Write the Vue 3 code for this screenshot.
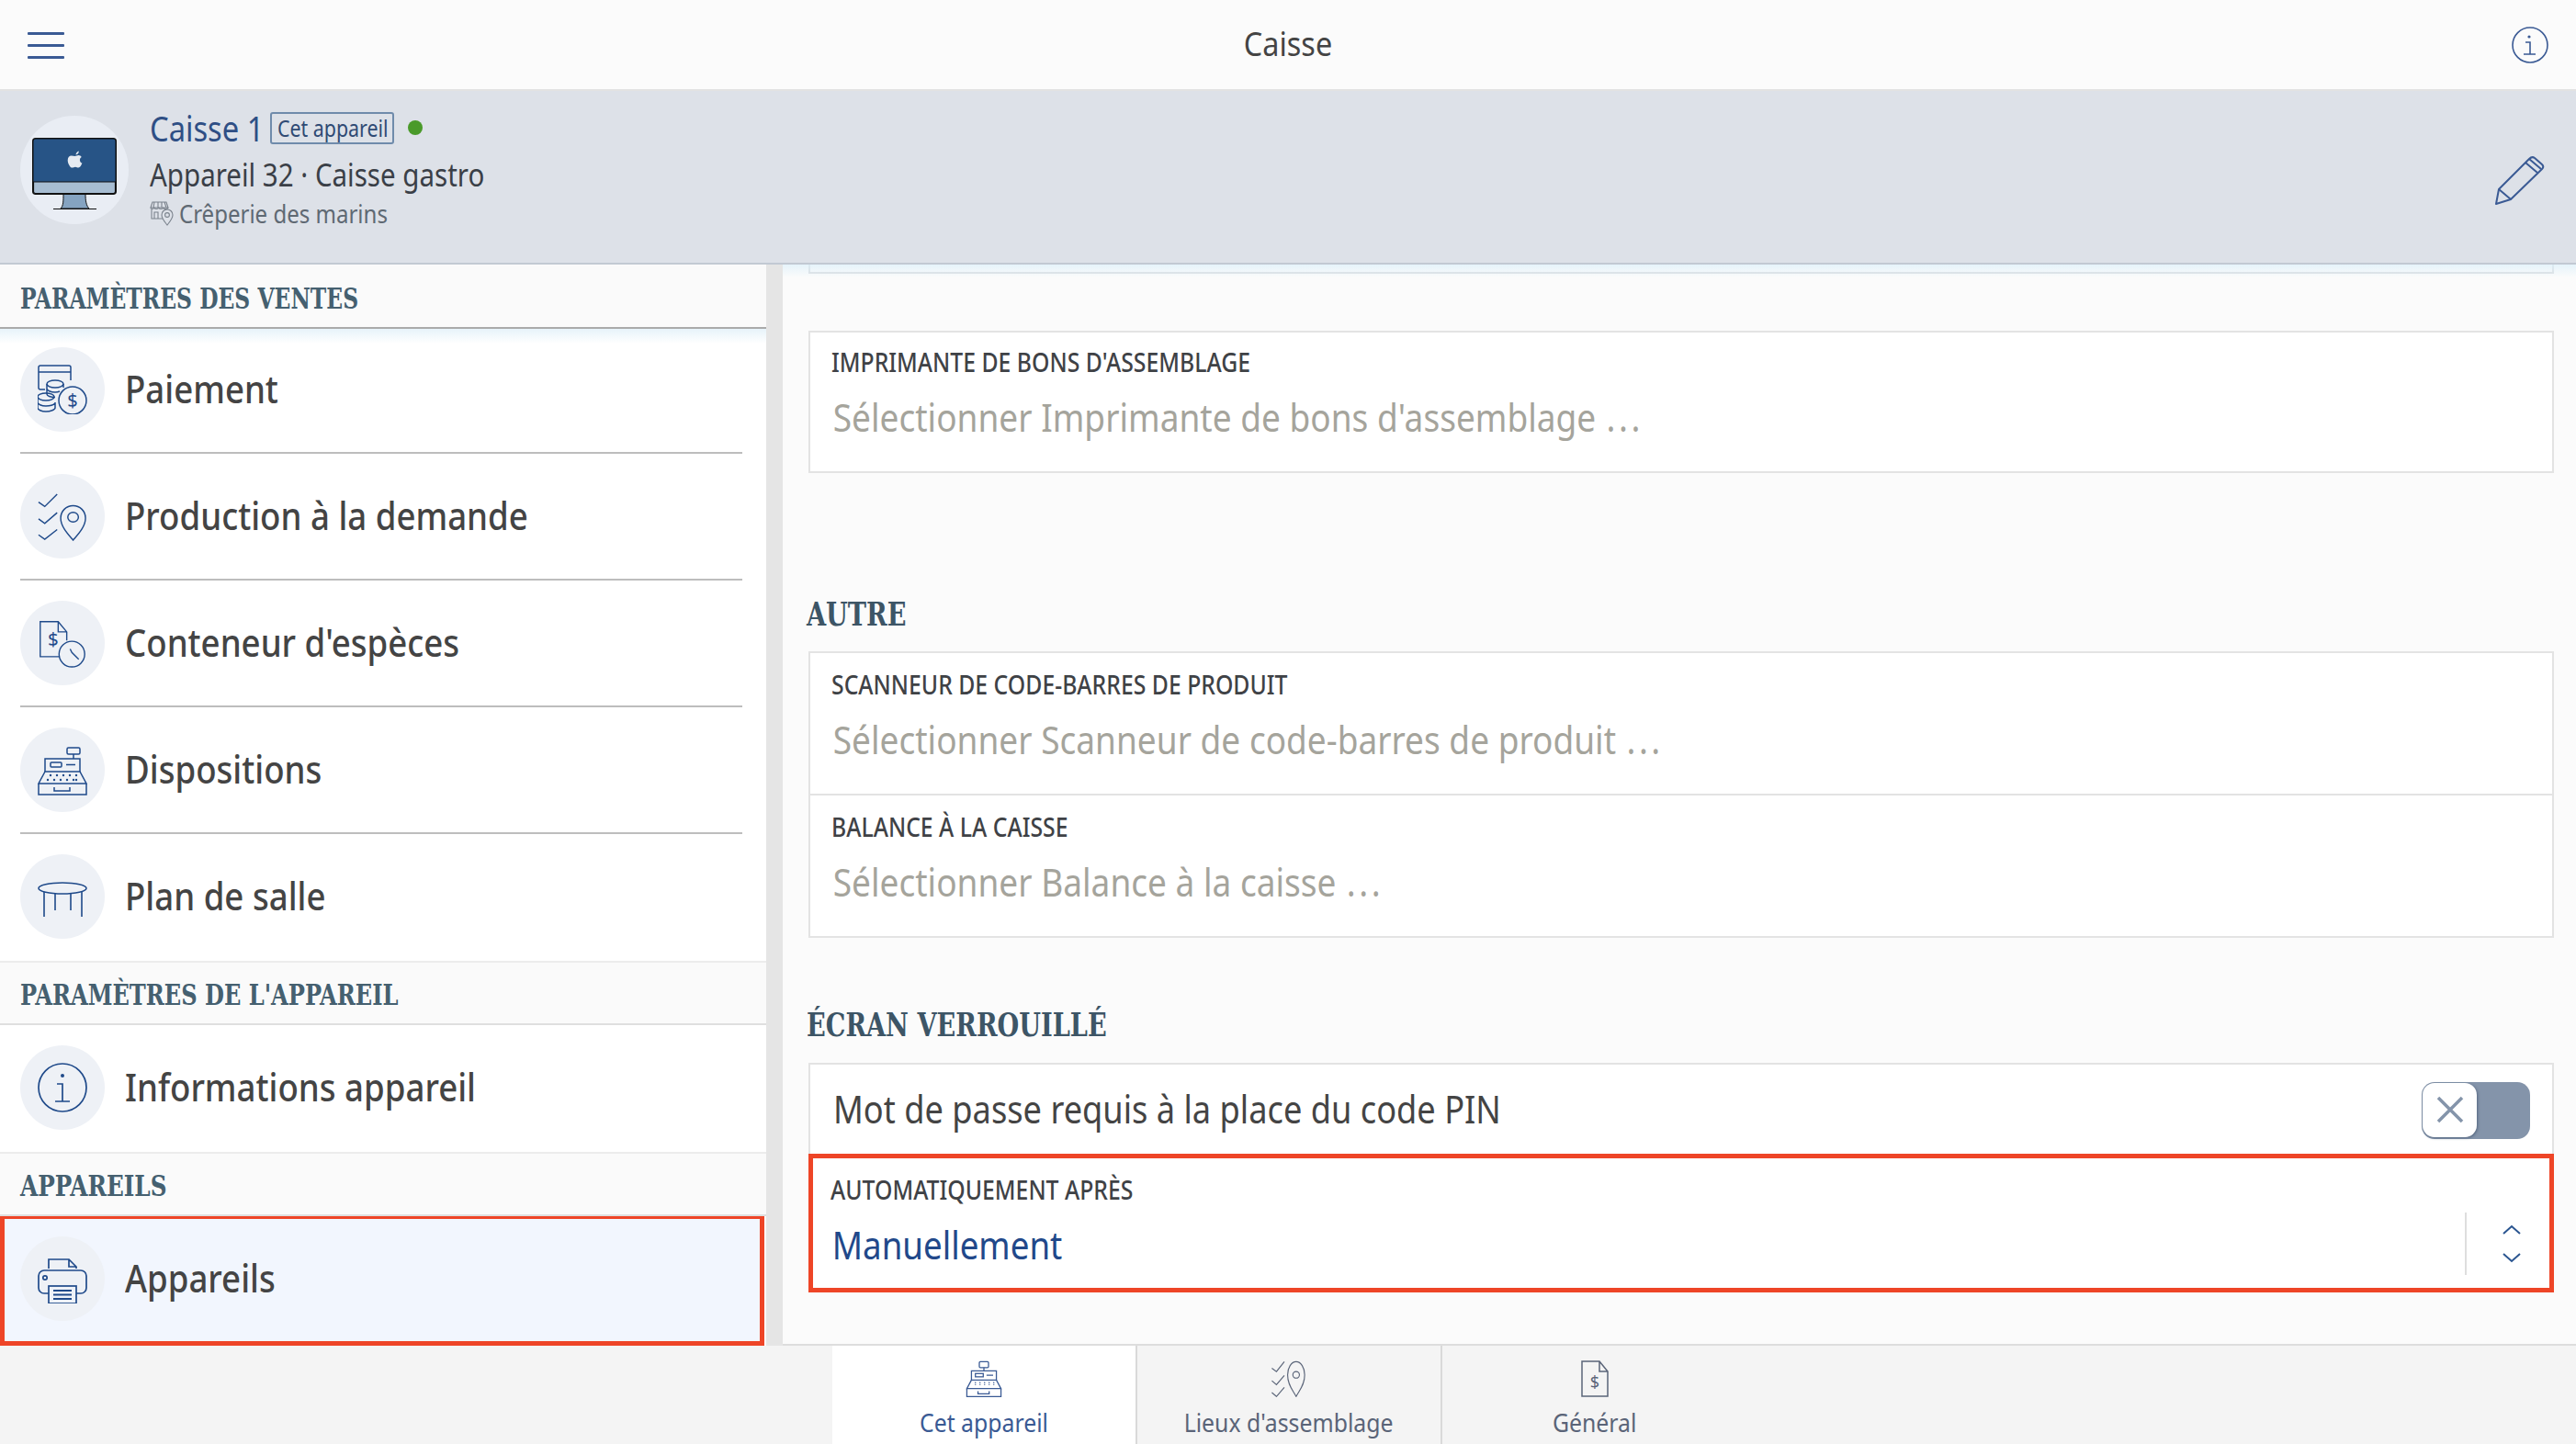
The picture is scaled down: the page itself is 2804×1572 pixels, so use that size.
<script setup>
const rows = [
  { id: 'pay', label: 'Paiement' },
  { id: 'prod', label: 'Production à la demande' },
  { id: 'cash', label: "Conteneur d'espèces" },
  { id: 'reg', label: 'Dispositions' },
  { id: 'table', label: 'Plan de salle' }
]
const regDots = [14, 21, 28, 35, 42]
</script>

<template>
  <div class="app">
    <header class="topbar">
      <div class="burger"><span></span><span></span><span></span></div>
      <div class="title">Caisse</div>
      <svg class="info-top" width="40" height="40" viewBox="0 0 40 40" fill="none" stroke="#3a5a94" stroke-width="1.6">
        <circle cx="20" cy="20" r="19"/>
        <circle cx="19" cy="11" r="1.6" fill="#3a5a94" stroke="none"/>
        <path d="M15 17h5v13M13 30h13"/>
      </svg>
    </header>

    <section class="device">
      <div class="avatar">
        <svg width="92" height="78" viewBox="0 0 92 78">
          <path d="M34 61h24c0 8 1 13 4 16H31c3-3 3-8 3-16z" fill="#85a3c1" stroke="#111" stroke-width="1"/>
          <rect x=".75" y=".75" width="90.5" height="60.5" rx="3" fill="#275486" stroke="#111" stroke-width="1.5"/>
          <path d="M1.5 48h89v10.5a2 2 0 0 1-2 2h-85a2 2 0 0 1-2-2z" fill="#a7bdd2" stroke="#111" stroke-width="1.2"/>
          <path d="M23 77.5h47" stroke="#111" stroke-width="1.2"/>
          <path d="M47.5 18.5c.3-2 1.6-3.400 3.300-3.900 .1 2.100-1.300 3.600-3.300 3.900zM46.500 20c1.300 0 2.400-.9 3.900-.9 1.400 0 2.600.7 3.300 1.800-2.700 1.700-2.200 5.500.7 6.700-.8 2.400-2.300 5-4 5-1.300 0-1.900-.8-3.400-.8s-2.200.8-3.400.8c-2.300 0-4.900-4.800-4.900-8.200 0-3 1.900-4.800 4-4.800 1.500 0 2.700.4 3.800.4z" fill="#e6ebf2"/>
        </svg>
      </div>
      <div class="device-text">
        <div class="device-line1">
          <span class="device-name">Caisse 1</span>
          <span class="badge"><span>Cet appareil</span></span>
          <span class="dot"></span>
        </div>
        <div class="device-line2">Appareil 32 · Caisse gastro</div>
        <div class="device-line3">
          <svg width="28" height="27" viewBox="0 0 28 27" fill="none" stroke="#7b838d" stroke-width="1.1">
            <path d="M3 1h15l2 6H1zM1 7c0 2 3 2 4 0 0 2 4 2 5 0 0 2 4 2 5 0 0 2 5 2 5 0M2 9v10h12M5 12h4v7H5zM5 1l-1 6M9 1v6M13 1v6M16 1l2 6"/>
            <path d="M19 26c-3-4-6-7-6-11a6 6 0 0 1 12 0c0 4-3 7-6 11z" fill="#dde1e8"/>
            <circle cx="19" cy="15" r="2.400"/>
          </svg>
          <span>Crêperie des marins</span>
        </div>
      </div>
      <svg class="pencil" width="54" height="56" viewBox="0 0 54 56" fill="none" stroke="#3a5a94" stroke-width="2" stroke-linejoin="round">
        <path d="M4 39L37 6c2-2 4-2.500 6-1l8 7c2 2 1.500 3.500 0 5L17 50 1 55z"/>
        <path d="M4 39l13 11M33 10l13 11M37 6l13 11"/>
      </svg>
    </section>

    <div class="main">
      <aside class="side">
        <h3 class="sec first"><span>PARAMÈTRES DES VENTES</span></h3>
        <div class="side-shade"></div>
        <div v-for="(r, i) in rows" :key="r.id" class="row" :class="{ last: i === rows.length - 1 }">
          <div class="circle">
            <svg v-if="r.id === 'pay'" width="54" height="54" viewBox="0 0 54 54" fill="none" stroke="#1f4a8a" stroke-width="1.500">
              <path d="M8 27H3a2 2 0 0 1-2-2V3a2 2 0 0 1 2-2h31a2 2 0 0 1 2 2v14M1 8h35"/>
              <ellipse cx="19" cy="21" rx="9" ry="4"/>
              <path d="M10 21v11c0 2 4 3.500 9 3.500M10 26c0 2 4 4 9 4 2 0 3 0 5-1M28 21v4"/>
              <ellipse cx="9" cy="35" rx="9" ry="4"/>
              <path d="M0 35v12c0 2 4 4 9 4s10-2 10-4v-6M0 41c0 2 4 4 9 4s9-2 10-3"/>
              <circle cx="38" cy="39" r="15"/>
              <text x="38" y="46" text-anchor="middle" font-family="Noto Sans" font-size="20" fill="#1f4a8a" stroke="none">$</text>
            </svg>
            <svg v-else-if="r.id === 'prod'" width="54" height="54" viewBox="0 0 54 56" fill="none" stroke="#1f4a8a" stroke-width="1.500">
              <path d="M0 12l7 5L21 3M0 31l7 5 14-12M0 49l7 5 14-11"/>
              <path d="M39 55C34 49 25 40 25 30a14 14 0 0 1 28 0c0 10-9 19-14 25z"/>
              <ellipse cx="39" cy="29" rx="6" ry="5.500"/>
            </svg>
            <svg v-else-if="r.id === 'cash'" width="54" height="54" viewBox="0 0 54 58" fill="none" stroke="#1f4a8a" stroke-width="1.500">
              <path d="M24 45H1V4h21l10 12v10M22 4v12h10"/>
              <text x="16" y="32" text-anchor="middle" font-family="Noto Sans" font-size="22" fill="#1f4a8a" stroke="none">$</text>
              <circle cx="38" cy="42" r="15"/>
              <path d="M36 36l2 4 8 8"/>
            </svg>
            <svg v-else-if="r.id === 'reg'" width="54" height="56" viewBox="0 0 54 56" fill="none" stroke="#1f4a8a" stroke-width="1.500">
              <rect x="32" y="4" width="14" height="7" rx="1.500"/>
              <path d="M39 11v5M8 30V16h38v14"/>
              <rect x="14" y="20" width="12" height="5" rx="1"/>
              <path d="M31 22.500h10M8 30L1 43h52l-7-13zM1 43v12h52V43M18 47v4h17v-4"/>
              <g fill="#1f4a8a" stroke="none">
                <circle v-for="x in regDots" :key="'a' + x" :cx="x" cy="34" r="1.200"/>
                <circle v-for="x in regDots" :key="'b' + x" :cx="x - 3" cy="39" r="1.200"/>
                <circle cx="42" cy="39" r="1.200"/>
              </g>
            </svg>
            <svg v-else width="54" height="54" viewBox="0 0 54 54" fill="none" stroke="#1f4a8a" stroke-width="1.600">
              <ellipse cx="27" cy="18" rx="26" ry="6"/>
              <path d="M7 22v27M19 24v18M36 24v18M48 22v27"/>
            </svg>
          </div>
          <span class="row-label">{{ r.label }}</span>
        </div>

        <h3 class="sec s2"><span>PARAMÈTRES DE L'APPAREIL</span></h3>
        <div class="row single">
          <div class="circle">
            <svg width="54" height="54" viewBox="0 0 54 54" fill="none" stroke="#1f4a8a" stroke-width="1.700">
              <circle cx="27" cy="27" r="26"/>
              <circle cx="27" cy="14" r="2" fill="#1f4a8a" stroke="none"/>
              <path d="M21 23h6v19M19 42h16"/>
            </svg>
          </div>
          <span class="row-label">Informations appareil</span>
        </div>
        <h3 class="sec s3"><span>APPAREILS</span></h3>
        <div class="row active">
          <div class="circle">
            <svg width="54" height="54" viewBox="0 0 54 54" fill="none" stroke="#1f4a8a" stroke-width="1.700">
              <path d="M12 16V6h22l8 8v2M34 6v8h8"/>
              <rect x="1" y="18" width="52" height="25" rx="6"/>
              <rect x="12" y="35" width="30" height="19" fill="#eef2f8"/>
              <path d="M17 40h20M17 44.500h20M17 49h20" stroke-width="2"/>
              <circle cx="8" cy="26" r="2.200"/>
            </svg>
          </div>
          <span class="row-label">Appareils</span>
        </div>
      </aside>

      <main class="content">
        <div class="content-shade"></div>
        <div class="stub"></div>
        <div class="field card1">
          <div class="f-label">IMPRIMANTE DE BONS D'ASSEMBLAGE</div>
          <div class="f-ph">Sélectionner Imprimante de bons d'assemblage <span class="dots">...</span></div>
        </div>

        <h2 class="heading autre"><span>AUTRE</span></h2>
        <div class="field">
          <div class="f-label">SCANNEUR DE CODE-BARRES DE PRODUIT</div>
          <div class="f-ph">Sélectionner Scanneur de code-barres de produit <span class="dots">...</span></div>
        </div>
        <div class="field joined">
          <div class="f-label">BALANCE À LA CAISSE</div>
          <div class="f-ph">Sélectionner Balance à la caisse <span class="dots">...</span></div>
        </div>

        <h2 class="heading ecran"><span>ÉCRAN VERROUILLÉ</span></h2>
        <div class="toggle-row">
          <span class="toggle-label">Mot de passe requis à la place du code PIN</span>
          <div class="toggle">
            <div class="knob">
              <svg width="30" height="30" viewBox="0 0 30 30" stroke="#8494aa" stroke-width="3.500"><path d="M2 2l26 26M28 2L2 28"/></svg>
            </div>
          </div>
        </div>
        <div class="select">
          <div class="select-main">
            <div class="f-label">AUTOMATIQUEMENT APRÈS</div>
            <div class="f-val">Manuellement</div>
          </div>
          <div class="chev">
            <svg width="20" height="42" viewBox="0 0 20 42" fill="none" stroke="#2a5590" stroke-width="2">
              <path d="M1 10l9-8 9 8M1 32l9 8 9-8"/>
            </svg>
          </div>
        </div>
      </main>
    </div>

    <nav class="tabs">
      <div class="tab on">
        <svg width="40" height="40" viewBox="0 0 54 56" fill="none" stroke="#3a5a94" stroke-width="1.800">
          <rect x="20" y="2" width="14" height="9" rx="1.500"/>
          <path d="M27 11v5M8 30V16h38v14"/>
          <rect x="14" y="20" width="12" height="5"/>
          <path d="M31 22.500h10M8 30L1 43h52l-7-13zM1 43v12h52V43M18 47v4h17v-4"/>
          <path d="M14 33v5M21 33v5M28 33v5M35 33v5M42 33v5" stroke-dasharray="1.500 1.500"/>
        </svg>
        <span>Cet appareil</span>
      </div>
      <div class="tab">
        <svg width="40" height="40" viewBox="0 0 54 56" fill="none" stroke="#5a6478" stroke-width="1.600">
          <path d="M1 12l7 5L20 2M1 31l7 6 12-14M1 49l7 6 12-14"/>
          <path d="M38 55C33 45 25 38 25 22a13 20 0 0 1 26 0c0 16-8 23-13 33z"/>
          <circle cx="38" cy="22" r="5"/>
        </svg>
        <span>Lieux d'assemblage</span>
      </div>
      <div class="tab">
        <svg width="30" height="40" viewBox="0 0 30 40" fill="none" stroke="#5a6478" stroke-width="1.500">
          <path d="M1 1h19l9 11v27H1zM20 1v11h9"/>
          <text x="15" y="30" text-anchor="middle" font-family="Noto Sans" font-size="18" fill="#5a6478" stroke="none">$</text>
        </svg>
        <span>Général</span>
      </div>
    </nav>
  </div>
</template>

<style>
html, body { margin: 0; background: #fbfbfb; }
</style>

<style scoped>
.app {
  width: 2804px;
  height: 1572px;
  display: flex;
  flex-direction: column;
  overflow: hidden;
  font-family: "Noto Sans", sans-serif;
  color: #444;
}
.device-name, .badge span, .device-line2, .device-line3 span, .row-label, .f-label, .f-ph, .f-val, .toggle-label, .tab span, .sec span, .heading span {
  display: inline-block;
  transform-origin: 0 50%;
  white-space: nowrap;
}
.device-name { transform: scaleX(.86); }
.device-line2 { display: block; transform: scaleX(.868); }
.device-line3 span { transform: scaleX(.858); }
.row-label { transform: scaleX(.872); }
.f-label { display: block; transform: scaleX(.885); }
.f-ph { display: block; transform: scaleX(.882); }
.f-val { display: block; transform: scaleX(.874); }
.toggle-label { transform: scaleX(.862); }
.tab span { transform: scaleX(.886); transform-origin: 50% 50%; }
.sec span, .heading span { transform: scaleX(.84); }
.sec.s2 span { transform: scaleX(.865); }
.sec.s3 span { transform: scaleX(.885); }
.topbar {
  height: 99px;
  box-sizing: border-box;
  border-bottom: 2px solid #e2e2e2;
  background: #fbfbfb;
  display: flex;
  align-items: center;
  justify-content: space-between;
  padding: 1px 30px 0;
  position: relative;
}
.burger { width: 40px; display: flex; flex-direction: column; gap: 10px; }
.burger span { display: block; height: 3px; background: #3a5a94; border-radius: 1px; }
.title {
  position: absolute;
  left: 0;
  right: 0;
  text-align: center;
  font-size: 36px;
  line-height: 96px;
  top: 0;
  color: #444;
  transform: scaleX(.9);
}
.device {
  height: 189px;
  box-sizing: border-box;
  background: #dde1e8;
  border-bottom: 2px solid #c2c9d3;
  display: flex;
  align-items: flex-start;
  padding: 27px 34px 0 22px;
  position: relative;
  z-index: 2;
}
.avatar {
  width: 118px;
  height: 118px;
  border-radius: 50%;
  background: #e9edf4;
  display: flex;
  align-items: center;
  justify-content: center;
  flex: none;
  margin-right: 23px;
  padding-top: 8px;
  box-sizing: border-box;
}
.device-text { flex: 1; margin-top: -10px; }
.device-line1 { display: flex; align-items: center; height: 50px; }
.device-name { font-size: 38px; color: #2f4f85; position: relative; top: -2px; }
.badge {
  margin-left: -14px;
  width: 135px;
  height: 35px;
  box-sizing: border-box;
  border: 2px solid #6f8bab;
  border-radius: 3px;
  font-size: 25px;
  line-height: 30px;
  padding: 0 0 0 6px;
  color: #2f4a74;
  flex: none;
  position: relative;
  top: -2px;
}
.badge span { transform: scaleX(.855); }
.dot { width: 16px; height: 16px; border-radius: 50%; background: #4a9a2a; margin-left: 15px; position: relative; top: -2px; }
.device-line2 { font-size: 34px; line-height: 48px; color: #3a3f47; }
.device-line3 { display: flex; align-items: center; gap: 4px; font-size: 28px; line-height: 36px; color: #5f6973; }
.pencil { margin-top: 41px; }
.main { flex: 1; display: flex; min-height: 0; }
.side {
  width: 852px;
  box-sizing: border-box;
  border-right: 18px solid #e5e5e5;
  background: #fff;
  flex: none;
  position: relative;
}
.sec {
  margin: 0;
  height: 68px;
  box-sizing: border-box;
  padding: 15px 0 0 22px;
  background: #fafafa;
  font-family: "DejaVu Serif Condensed", serif;
  font-weight: 700;
  font-size: 31px;
  line-height: 40px;
  color: #456070;
  box-shadow: 0 2px 0 #dfdfdf;
  border-top: 2px solid #ececec;
  position: relative;
  z-index: 1;
}
.sec.first { box-shadow: 0 2px 0 #aaa; border-top: 0; padding-top: 17px; }
.side-shade {
  position: absolute;
  left: 0;
  right: 0;
  top: 70px;
  height: 16px;
  background: linear-gradient(#e7f3fa, #fff);
}
.row {
  height: 138px;
  box-sizing: border-box;
  margin: 0 26px 0 22px;
  display: flex;
  align-items: center;
  gap: 22px;
  border-bottom: 2px solid #bdbdbd;
  position: relative;
}
.row.last { border-bottom-color: transparent; }
.row.single { height: 140px; border-bottom: 0; }
.row.active {
  margin: 0 2px 0 0;
  padding: 0 0 3px 22px;
  height: 143px;
  border: 0;
  background: #f2f6fe;
  box-shadow: inset 0 0 0 5px #ee4527;
}
.circle {
  width: 92px;
  height: 92px;
  border-radius: 50%;
  background: #eef1f6;
  display: flex;
  align-items: center;
  justify-content: center;
  flex: none;
}
.row-label { font-size: 42px; font-weight: 500; color: #444; position: relative; top: -2px; }
.content {
  flex: 1;
  background: #fbfbfb;
  position: relative;
  padding: 0 24px 0 28px;
  box-sizing: border-box;
  border-bottom: 2px solid #ddd;
}
.content-shade {
  position: absolute;
  left: 0;
  right: 0;
  top: 0;
  height: 14px;
  background: linear-gradient(rgba(220,240,250,.7), rgba(251,251,251,0));
}
.stub {
  height: 10px;
  box-sizing: border-box;
  border: 2px solid #dcdfe2;
  border-top: 0;
}
.field {
  height: 157px;
  box-sizing: border-box;
  border: 2px solid #e3e3e3;
  background: #fff;
  padding: 15px 0 0 23px;
}
.field.card1 { margin-top: 62px; height: 155px; padding-top: 13px; }
.field.joined { margin-top: -2px; }
.f-label { font-size: 28px; font-weight: 500; line-height: 38px; color: #3f4246; }
.f-ph { font-size: 42px; line-height: 60px; margin-top: 11px; padding-left: 2px; color: #a5a49c; }
.dots { letter-spacing: 4px; margin-left: 2px; }
.heading {
  margin: 0;
  font-family: "DejaVu Serif Condensed", serif;
  font-weight: 700;
  font-size: 36px;
  line-height: 44px;
  color: #3d5566;
  margin-left: -2px;
}
.autre { margin-top: 131px; margin-bottom: 19px; }
.ecran { margin-top: 72px; margin-bottom: 20px; }
.toggle-row {
  height: 103px;
  box-sizing: border-box;
  border: 2px solid #e3e3e3;
  background: #fff;
  display: flex;
  align-items: center;
  justify-content: space-between;
  padding: 0 24px 4px 25px;
  font-size: 42px;
  color: #444;
}
.toggle {
  width: 118px;
  height: 62px;
  border-radius: 14px;
  background: #8494aa;
  padding: 1px;
  box-sizing: border-box;
  position: relative;
  top: 2px;
}
.knob {
  width: 59px;
  height: 59px;
  box-sizing: border-box;
  border-radius: 13px;
  background: #fff;
  display: flex;
  align-items: center;
  justify-content: center;
  box-shadow: 1px 1px 3px rgba(40,60,90,.5);
}
.select {
  height: 151px;
  margin-top: -4px;
  box-sizing: border-box;
  border: 5px solid #ee4527;
  background: #fff;
  display: flex;
  position: relative;
  padding: 15px 0 0 19px;
}
.select-main { flex: 1; }
.f-val { font-size: 42px; line-height: 60px; margin-top: 11px; padding-left: 2px; color: #21488a; }
.chev {
  position: absolute;
  right: 0;
  top: 59px;
  width: 92px;
  height: 68px;
  border-left: 2px solid #dedede;
  box-sizing: border-box;
  display: flex;
  align-items: center;
  justify-content: center;
  padding-left: 8px;
}
.tabs {
  height: 107px;
  background: #f4f4f4;
  display: flex;
  padding-left: 906px;
  flex: none;
}
.tab {
  width: 332px;
  box-sizing: border-box;
  border-right: 2px solid #d9d9d9;
  display: flex;
  flex-direction: column;
  align-items: center;
  padding-top: 16px;
  font-size: 28px;
  line-height: 40px;
  color: #5a6478;
  gap: 7px;
}
.tab.on { background: #fff; color: #3a5a94; }
.tab:last-child { border-right: 0; }
</style>
